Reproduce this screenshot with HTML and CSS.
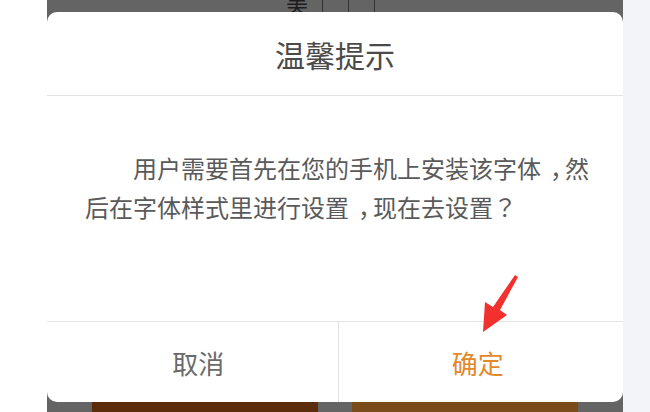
FILE: index.html
```html
<!DOCTYPE html>
<html lang="zh-CN">

<head>
    <meta charset="UTF-8">
    <meta name="viewport" content="width=device-width, initial-scale=1.0">
    <title>温馨提示</title>

    <link rel="stylesheet" href="styles.css">
</head>

<body>

    <div class="side side--left"></div>

    <div class="screen">
        <div class="screen__top">
            <span class="ghost-char">美</span>
            <span class="ghost-line ghost-line--first"></span>
            <span class="ghost-line"></span>
            <span class="ghost-line"></span>
        </div>
        <!--/screen__top-->

        <div class="dialog">
            <div class="dialog__head">温馨提示</div>

            <p class="dialog__body">用户需要首先在您的手机上安装该字体<span class="comma">，</span>然后在字体样式里进行设置<span class="comma">，</span>现在去设置<span class="punct" lang="zh-TW">？</span></p>

            <div class="dialog__foot">
                <div class="dialog__btn dialog__btn--cancel">取消</div>
                <div class="dialog__btn dialog__btn--ok">确定</div>
            </div>

            <!-- red pointer over the confirm button -->
            <svg class="pointer" width="40" height="60" viewBox="482 273 40 60">
                <polygon points="515,275 518,277 500,310 507,315 483,332 485,302 493,307" fill="#f2312f" />
            </svg>
        </div>
        <!--/dialog-->

        <div class="screen__bottom">
            <div class="tile tile--dark"></div>
            <div class="tile tile--light"></div>
        </div>
    </div>
    <!--/screen-->

    <div class="side side--right"></div>

</body>

</html>
```

FILE: styles.css
```css
body {
    margin: 0;
    height: 412px;
    display: flex;
    background: #fff;
    font-family: "Noto Sans CJK SC", sans-serif;
    overflow: hidden;
}

.side--left {
    width: 47px;
    background: #fff;
}

.side--right {
    flex: 1;
    background: #f3f3fa;
}

.screen {
    width: 576px;
    display: flex;
    flex-direction: column;
    background: #646464;
}

.screen__top {
    height: 12px;
    overflow: hidden;
    display: flex;
    align-items: flex-end;
    padding-left: 239px;
}

.ghost-char {
    font-size: 22px;
    line-height: 20px;
    color: #1e1e1e;
}

.ghost-line {
    width: 1px;
    height: 12px;
    background: #333;
    margin-left: 25px;
}

.ghost-line--first {
    margin-left: 14px;
}

.dialog {
    position: relative;
    flex: 1;
    display: flex;
    flex-direction: column;
    background: #fff;
    border-radius: 10px;
}

.dialog__head {
    height: 83px;
    display: flex;
    align-items: center;
    justify-content: center;
    border-bottom: 1px solid #e3e3e3;
    font-size: 30px;
    color: #4a4a4a;
}

.dialog__body {
    flex: 1;
    margin: 0;
    padding: 52px 30px 0 38px;
    font-size: 24px;
    line-height: 39px;
    text-indent: 48px;
    color: #5a5a5a;
}

/* centre the full-width comma like the phone font does */
.comma {
    display: inline-block;
    text-indent: 0;
    transform: translateX(9px);
}

.punct {
    font-family: "Noto Sans CJK TC", sans-serif;
}

.dialog__foot {
    height: 80px;
    display: flex;
    border-top: 1px solid #e3e3e3;
}

.dialog__btn {
    flex: 1;
    display: flex;
    align-items: center;
    justify-content: center;
    font-size: 26px;
    color: #6a6a6a;
}

.dialog__btn--cancel {
    padding-left: 12px;
}

.dialog__btn + .dialog__btn {
    border-left: 1px solid #e3e3e3;
}

.dialog__btn--ok {
    color: #e2892c;
    padding-right: 6px;
}

.pointer {
    position: absolute;
    left: 435px;
    top: 261px;
}

.screen__bottom {
    height: 10px;
    display: flex;
    padding-left: 45px;
    gap: 34px;
}

.tile {
    width: 226px;
}

.tile--dark {
    background: #5b2d0c;
}

.tile--light {
    background: #7a4c1a;
}
```
